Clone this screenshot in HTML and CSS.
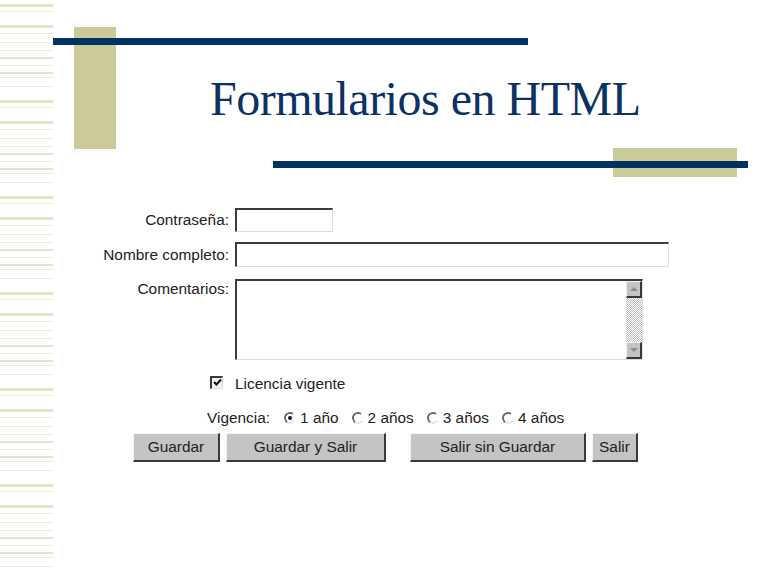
FILE: index.html
```html
<!DOCTYPE html>
<html lang="es">
<head>
<meta charset="utf-8">
<title>Formularios en HTML</title>
<link rel="stylesheet" href="styles.css">
</head>
<body>
<div class="stripes"></div>
<main class="slide">
  <header class="head">
    <div class="bar"></div>
    <div class="line line-top"></div>
    <h1 class="title">Formularios en HTML</h1>
    <div class="rect"></div>
    <div class="line line-bottom"></div>
  </header>
  <form class="form">
    <div class="row row-pass">
      <label class="lbl">Contraseña:</label>
      <div class="field field-pass"></div>
    </div>
    <div class="row row-name">
      <label class="lbl">Nombre completo:</label>
      <div class="field field-name"></div>
    </div>
    <div class="row row-com">
      <label class="lbl lbl-top">Comentarios:</label>
      <div class="field field-area">
        <div class="scroll">
          <div class="sbtn"><span class="arrow up"></span></div>
          <div class="track"></div>
          <div class="sbtn"><span class="arrow down"></span></div>
        </div>
      </div>
    </div>
    <div class="row row-check">
      <div class="lbl lbl-check">
        <span class="check">
          <svg width="9" height="9" viewBox="0 0 9 9"><path d="M1 4 L3.5 6.5 L8 1.5" fill="none" stroke="#111" stroke-width="2"/></svg>
        </span>
      </div>
      <span class="txt">Licencia vigente</span>
    </div>
    <div class="row row-vig">
      <span class="txt vig-label">Vigencia:</span>
      <span class="opt"><span class="radio on"></span><span class="txt">1 año</span></span>
      <span class="opt"><span class="radio"></span><span class="txt">2 años</span></span>
      <span class="opt"><span class="radio"></span><span class="txt">3 años</span></span>
      <span class="opt"><span class="radio"></span><span class="txt">4 años</span></span>
    </div>
    <div class="row row-btns">
      <span class="btn b1">Guardar</span>
      <span class="btn b2">Guardar y Salir</span>
      <span class="btn b3">Salir sin Guardar</span>
      <span class="btn b4">Salir</span>
    </div>
  </form>
</main>
</body>
</html>
```
FILE: styles.css
```css
html, body {
  margin: 0;
  padding: 0;
  background: #ffffff;
}
body {
  width: 768px;
  height: 576px;
  overflow: hidden;
  display: flex;
  font-family: "Liberation Sans", Arial, sans-serif;
}
.stripes {
  width: 53px;
  flex: none;
  height: 576px;
  background: repeating-linear-gradient(to bottom,
    transparent 0 4px, #e3e3c6 4px 7px, transparent 7px 11px, #ececd9 11px 12px,
    transparent 12px 25px, #e3e3c6 25px 28px, transparent 28px 33px, #ececd9 33px 34px,
    transparent 34px 42px, #ececd9 42px 43px, transparent 43px 50px, #ececd9 50px 51px,
    transparent 51px 57px, #e3e3c6 57px 59px, transparent 59px 65px, #ececd9 65px 66px,
    transparent 66px 72px, #e3e3c6 72px 74px, transparent 74px 77px, #ececd9 77px 78px,
    transparent 78px 86px, #ececd9 86px 87px, transparent 87px 96px);
}
.slide {
  flex: 1;
  display: flex;
  flex-direction: column;
}
.head {
  display: grid;
  height: 177px;
}
.head > * {
  grid-area: 1 / 1;
  align-self: start;
  justify-self: start;
}
.bar {
  margin: 27px 0 0 21px;
  width: 42px;
  height: 122px;
  background: #cbcb99;
}
.line {
  width: 475px;
  height: 7px;
  background: #003363;
}
.line-top { margin: 38px 0 0 0; }
.line-bottom { margin: 161px 0 0 220px; }
.rect {
  margin: 148px 0 0 560px;
  width: 124px;
  height: 29px;
  background: #cbcb99;
}
.title {
  margin: 75px 0 0 157px;
  font-family: "Liberation Serif", "Times New Roman", serif;
  font-weight: normal;
  font-size: 48px;
  line-height: 48px;
  letter-spacing: -0.5px;
  color: #0b3263;
  white-space: nowrap;
}
.form {
  margin-top: 31px;
  display: flex;
  flex-direction: column;
  font-size: 15.4px;
  color: #222222;
}
.row {
  display: flex;
  align-items: center;
}
.lbl {
  width: 182px;
  padding-right: 6px;
  box-sizing: border-box;
  text-align: right;
  white-space: nowrap;
}
.field {
  box-sizing: border-box;
  background: #ffffff;
  border-top: 2px solid #3c3c3c;
  border-left: 2px solid #3c3c3c;
  border-right: 1px solid #dedede;
  border-bottom: 1px solid #dedede;
}
.field-pass { width: 98px; height: 24px; }
.row-name { margin-top: 10px; }
.field-name { width: 434px; height: 25px; }
.row-com { margin-top: 12px; align-items: flex-start; }
.lbl-top { padding-top: 1px; }
.field-area {
  width: 408px;
  height: 81px;
  display: flex;
  justify-content: flex-end;
}
.scroll {
  width: 16px;
  display: flex;
  flex-direction: column;
}
.sbtn {
  box-sizing: border-box;
  height: 17px;
  background: #c4c4c4;
  border-top: 1px solid #f2f2f2;
  border-left: 1px solid #f2f2f2;
  border-right: 2px solid #3a3a3a;
  border-bottom: 2px solid #3a3a3a;
  display: flex;
  align-items: center;
  justify-content: center;
}
.track {
  flex: 1;
  background-color: #ffffff;
  background-image: repeating-conic-gradient(#c0c0c0 0 25%, #ffffff 0 50%);
  background-size: 2px 2px;
}
.arrow {
  width: 0;
  height: 0;
  border-left: 4px solid transparent;
  border-right: 4px solid transparent;
}
.arrow.up { border-bottom: 4px solid #8e8e8e; }
.arrow.down { border-top: 4px solid #8e8e8e; }
.row-check {
  margin-top: 14px;
  height: 20px;
}
.lbl-check {
  display: flex;
  justify-content: flex-end;
  padding-right: 12px;
  margin-bottom: 4px;
}
.check {
  box-sizing: border-box;
  width: 13px;
  height: 13px;
  background: #f0f0f0;
  border-top: 2px solid #3a3a3a;
  border-left: 2px solid #3a3a3a;
  border-right: 1px solid #dcdcdc;
  border-bottom: 1px solid #dcdcdc;
  display: flex;
  align-items: center;
  justify-content: center;
}
.check svg { display: block; }
.txt { white-space: nowrap; }
.row-vig {
  margin-top: 14px;
  height: 20px;
  margin-left: 154px;
}
.vig-label { margin-right: 14px; }
.opt {
  display: flex;
  align-items: center;
  gap: 4px;
  margin-right: 13px;
}
.radio {
  box-sizing: border-box;
  width: 12px;
  height: 12px;
  border-radius: 50%;
  border: 2px solid;
  border-color: #6a6a6a transparent #e6e6e6 #6a6a6a;
  transform: rotate(-10deg);
  display: flex;
  align-items: center;
  justify-content: center;
}
.radio.on::after {
  content: "";
  width: 4px;
  height: 4px;
  border-radius: 50%;
  background: #111111;
}
.row-btns {
  margin-top: 5px;
  margin-left: 80px;
  gap: 6px;
}
.btn {
  box-sizing: border-box;
  height: 29px;
  background: #c4c4c4;
  border-top: 1px solid #f4f4f4;
  border-left: 1px solid #f4f4f4;
  border-right: 2px solid #3a3a3a;
  border-bottom: 2px solid #3a3a3a;
  display: flex;
  align-items: center;
  justify-content: center;
  color: #222222;
  white-space: nowrap;
}
.b1 { width: 87px; }
.b2 { width: 160px; }
.b3 { width: 176px; margin-left: 18px; }
.b4 { width: 46px; }
```
